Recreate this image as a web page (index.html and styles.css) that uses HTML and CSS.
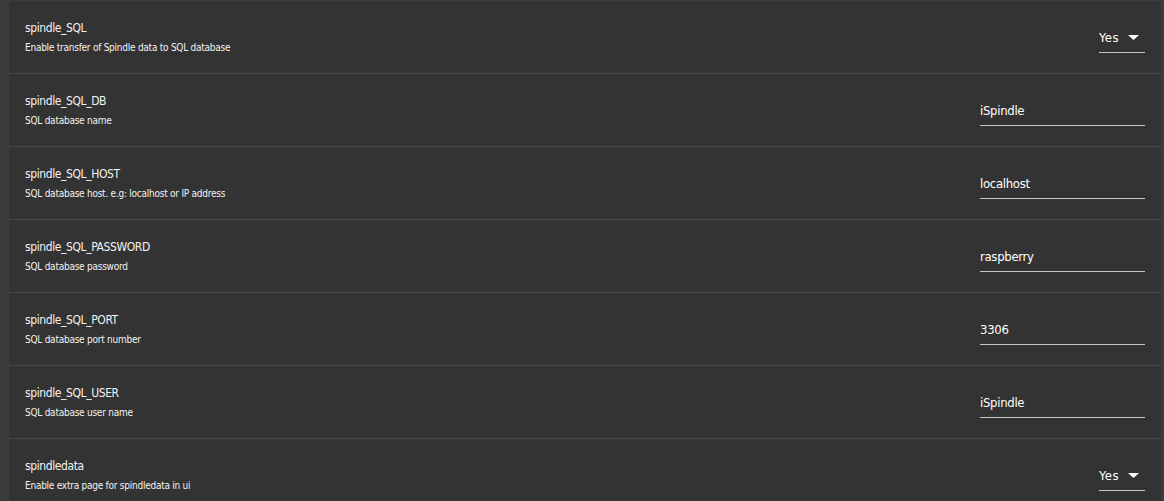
FILE: index.html
```html
<!DOCTYPE html>
<html>
<head>
<meta charset="utf-8">
<link rel="stylesheet" href="styles.css">
</head>
<body>
<div class="panel">
  <div class="row">
    <div class="info"><div class="name">spindle_SQL</div><div class="desc">Enable transfer of Spindle data to SQL database</div></div>
    <div class="select"><span class="val">Yes</span><svg class="caret" width="11" height="5" viewBox="0 0 11 5"><path d="M0 0h11L5.5 5z" fill="#fff"/></svg></div>
  </div>
  <div class="row">
    <div class="info"><div class="name">spindle_SQL_DB</div><div class="desc">SQL database name</div></div>
    <div class="input">iSpindle</div>
  </div>
  <div class="row">
    <div class="info"><div class="name">spindle_SQL_HOST</div><div class="desc">SQL database host. e.g: localhost or IP address</div></div>
    <div class="input">localhost</div>
  </div>
  <div class="row">
    <div class="info"><div class="name">spindle_SQL_PASSWORD</div><div class="desc">SQL database password</div></div>
    <div class="input">raspberry</div>
  </div>
  <div class="row">
    <div class="info"><div class="name">spindle_SQL_PORT</div><div class="desc">SQL database port number</div></div>
    <div class="input">3306</div>
  </div>
  <div class="row">
    <div class="info"><div class="name">spindle_SQL_USER</div><div class="desc">SQL database user name</div></div>
    <div class="input">iSpindle</div>
  </div>
  <div class="row">
    <div class="info"><div class="name">spindledata</div><div class="desc">Enable extra page for spindledata in ui</div></div>
    <div class="select"><span class="val">Yes</span><svg class="caret" width="11" height="5" viewBox="0 0 11 5"><path d="M0 0h11L5.5 5z" fill="#fff"/></svg></div>
  </div>
</div>
</body>
</html>
```
FILE: styles.css
```css
html, body {
  margin: 0;
  padding: 0;
  background: #3b3b3b;
  height: 100%;
  overflow: hidden;
}
body {
  font-family: "DejaVu Sans Condensed", "DejaVu Sans", sans-serif;
  color: #f2f2f2;
}
.panel {
  margin: 1px 3px 0 9px;
  background: #333333;
}
.row {
  height: 72px;
  border-bottom: 1px solid #474747;
  display: flex;
  align-items: center;
  justify-content: space-between;
  padding: 0 16px;
}
.info {
  display: flex;
  flex-direction: column;
  gap: 2px;
}
.name {
  font-size: 12px;
  line-height: 20px;
  letter-spacing: -0.4px;
}
.desc {
  font-size: 10px;
  line-height: 16px;
  letter-spacing: -0.25px;
}
.input {
  width: 165px;
  height: 29px;
  line-height: 29px;
  font-size: 13px;
  border-bottom: 1px solid #c8c8c8;
  margin-top: 1px;
  color: #fff;
  letter-spacing: -0.3px;
}
.select {
  width: 46px;
  height: 29px;
  border-bottom: 1px solid #c8c8c8;
  margin-top: 1px;
  display: flex;
  align-items: center;
  justify-content: space-between;
  font-size: 13px;
  color: #fff;
}
.val {
  letter-spacing: 0.4px;
}
.caret {
  margin-right: 6px;
}
```
